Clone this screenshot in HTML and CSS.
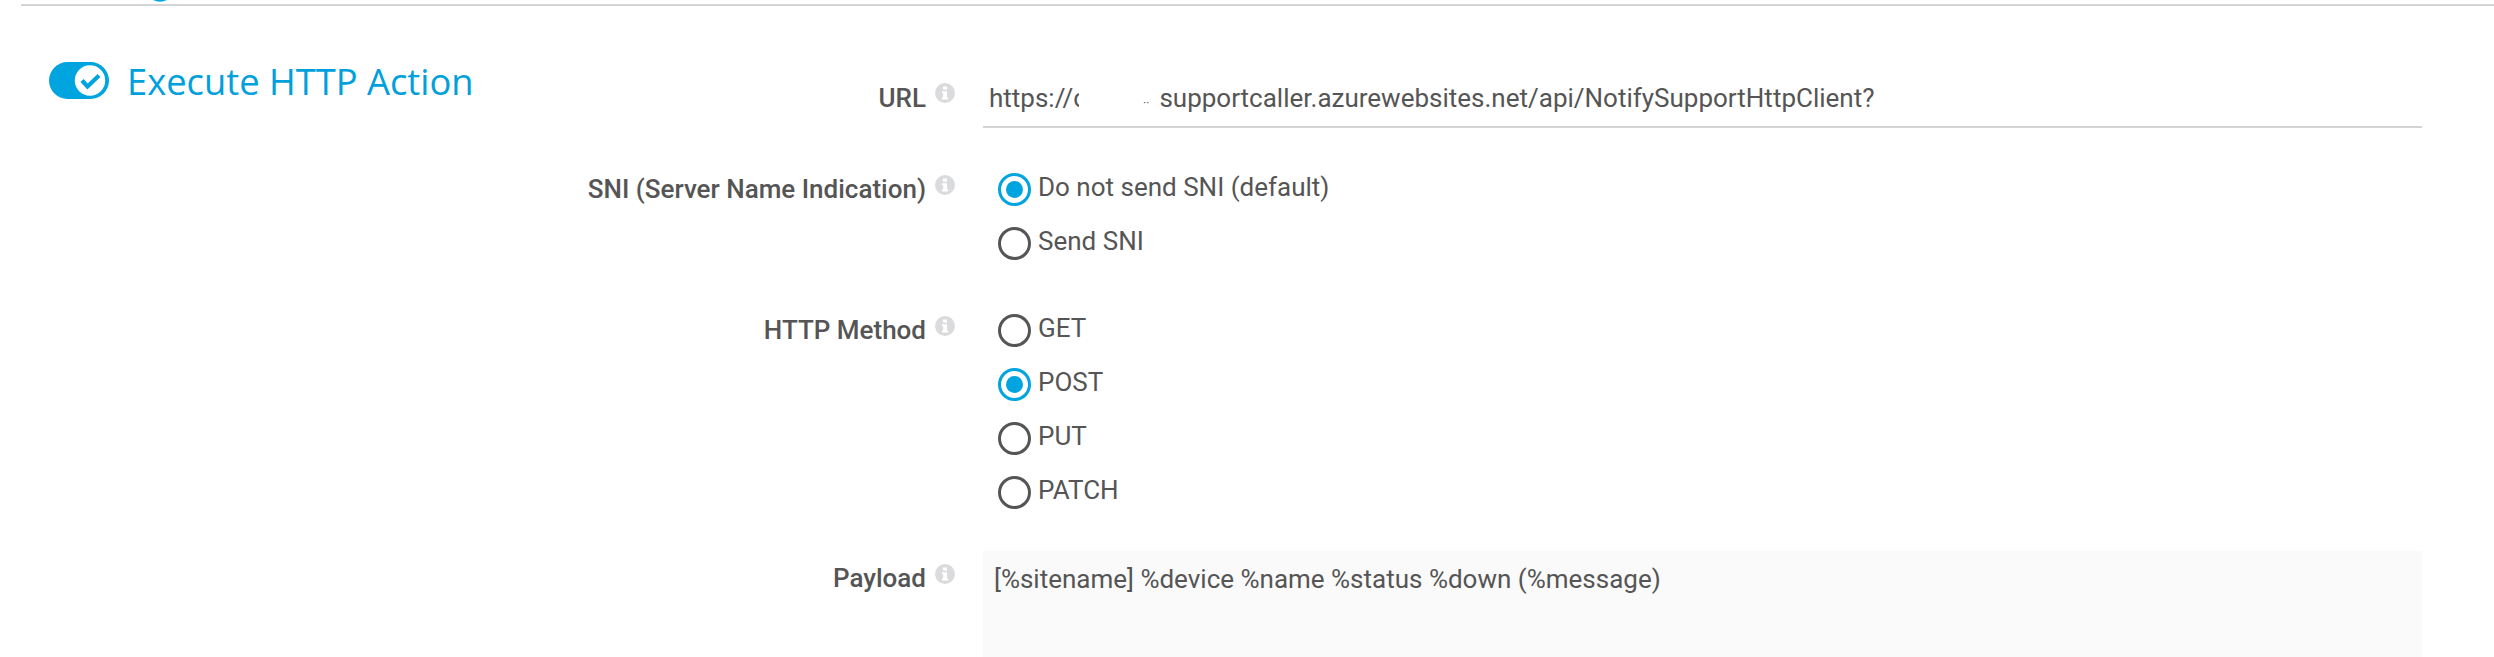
FILE: index.html
```html
<!DOCTYPE html>
<html lang="en">
<head>
<meta charset="utf-8">
<title>Execute HTTP Action</title>
<link rel="stylesheet" href="styles.css">
</head>
<body>
<header class="top-bar">
  <svg class="top-arc" width="14" height="3" viewBox="0 0 14 3"><path d="M0 0 Q7 3.6 14 0 Z" fill="#00a4df"/></svg>
</header>
<main class="content">
  <section class="title-col">
    <svg class="toggle" width="60" height="37" viewBox="0 0 60 37">
      <rect width="60" height="37" rx="18.5" fill="#00a4df"/>
      <circle cx="41" cy="18.5" r="15.2" fill="#fff"/>
      <path d="M33 18.5 L38.5 24.5 L50 13.5" fill="none" stroke="#00a4df" stroke-width="4.2"/>
    </svg>
    <h2 class="title">Execute HTTP Action</h2>
  </section>
  <form class="form">
    <div class="row row-url">
      <div class="label"><span>URL</span><svg class="info" viewBox="0 0 20 20"><use href="#info"/></svg></div>
      <div class="url-field">https://<span class="clip-c">c</span><span class="specks">··</span>supportcaller.azurewebsites.net/api/NotifySupportHttpClient?</div>
    </div>
    <div class="row">
      <div class="label label-radio"><span>SNI (Server Name Indication)</span><svg class="info" viewBox="0 0 20 20"><use href="#info"/></svg></div>
      <div class="radios">
        <div class="radio checked"><i class="dot"></i>Do not send SNI (default)</div>
        <div class="radio"><i class="dot"></i>Send SNI</div>
      </div>
    </div>
    <div class="row">
      <div class="label label-radio"><span>HTTP Method</span><svg class="info" viewBox="0 0 20 20"><use href="#info"/></svg></div>
      <div class="radios radios-last">
        <div class="radio"><i class="dot"></i>GET</div>
        <div class="radio checked"><i class="dot"></i>POST</div>
        <div class="radio"><i class="dot"></i>PUT</div>
        <div class="radio"><i class="dot"></i>PATCH</div>
      </div>
    </div>
    <div class="row">
      <div class="label label-payload"><span>Payload</span><svg class="info" viewBox="0 0 20 20"><use href="#info"/></svg></div>
      <div class="payload">[%sitename] %device %name %status %down (%message)</div>
    </div>
  </form>
</main>
<svg class="defs" width="0" height="0">
  <symbol id="info" viewBox="0 0 20 20">
    <circle cx="10" cy="10" r="10" fill="#d9dbdc"/>
    <rect x="8" y="3.5" width="4" height="3.2" fill="#fff"/>
    <path d="M7 8.2h5v6.4h1.2v2H7v-2h1.2v-4.4H7z" fill="#fff"/>
  </symbol>
</svg>
</body>
</html>
```
FILE: styles.css
```css
* { box-sizing: border-box; }
html, body { margin: 0; height: 657px; overflow: hidden; background: #fff; }
body { font-family: Roboto, "Liberation Sans", sans-serif; color: #555; }

.top-bar {
  height: 6px;
  margin-left: 21px;
  padding-left: 132px;
  border-bottom: 2px solid #d4d4d4;
  overflow: hidden;
}
.top-arc { display: block; }

.content { display: flex; }
.title-col {
  width: 560px;
  flex: none;
  display: flex;
  align-items: flex-start;
  padding: 56px 0 0 49px;
  gap: 18px;
}
.toggle { flex: none; }
.title {
  margin: 0;
  font-family: "Open Sans", sans-serif;
  font-weight: 400;
  font-size: 36.3px;
  line-height: 39px;
  color: #00a0dc;
  white-space: nowrap;
}

.form {
  flex: none;
  width: 1862px;
  padding-top: 71px;
  display: flex;
  flex-direction: column;
  gap: 33px;
}
.row {
  display: grid;
  grid-template-columns: 395px 1439px;
  column-gap: 28px;
  align-items: start;
}
.label {
  display: flex;
  justify-content: flex-end;
  gap: 9px;
  font-weight: 500;
  font-size: 26px;
  line-height: 40px;
  white-space: nowrap;
}
.row-url .label { line-height: 42px; }
.label-radio { padding-top: 7px; }
.label-payload { padding-top: 7px; }
.info { width: 20px; height: 20px; margin-top: 6px; flex: none; }

.url-field {
  height: 51px;
  margin-bottom: 1px;
  padding: 0 0 0 6px;
  font-size: 26px;
  line-height: 42px;
  border-bottom: 2px solid #d4d4d4;
  white-space: nowrap;
}
.clip-c { position: relative; display: inline-block; }
.clip-c::after {
  content: "";
  position: absolute;
  top: 0;
  bottom: 0;
  left: 6px;
  right: -2px;
  background: #fff;
}
.specks { display: inline-block; width: 72.5px; text-align: right; padding-right: 10px; font-size: 12px; }

.radios {
  display: flex;
  flex-direction: column;
  gap: 20px;
  padding: 10px 0 10px 15px;
}
.radios-last { padding-bottom: 9px; }
.radio {
  display: flex;
  align-items: flex-start;
  height: 34px;
  gap: 7px;
  font-size: 26px;
  line-height: 30px;
}
.dot {
  width: 33px;
  height: 33px;
  margin-top: 1px;
  flex: none;
  border: 3px solid #555;
  border-radius: 50%;
  display: flex;
  align-items: center;
  justify-content: center;
}
.checked .dot { border-color: #00a4df; }
.checked .dot::after {
  content: "";
  width: 17px;
  height: 17px;
  border-radius: 50%;
  background: #00a4df;
}

.payload {
  height: 120px;
  padding: 8px 11px;
  background: #fafafa;
  font-size: 26px;
  line-height: 40px;
}
.defs { position: absolute; }
```
